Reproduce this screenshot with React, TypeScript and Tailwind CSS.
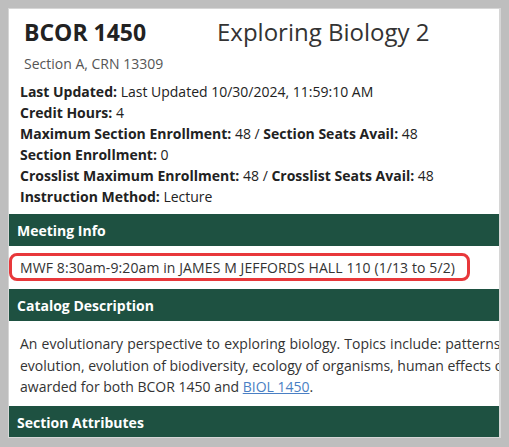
import React from "react";

const font = { fontFamily: '"Open Sans", "Noto Sans", Arial, sans-serif' };

function Bar({ title }: { title: string }) {
  return (
    <div className="h-[32px] bg-[#1e5141] pl-[8px] flex items-center text-white font-bold text-[14px] leading-[21px]">
      {title}
    </div>
  );
}

function Line({ label, children }: { label: string; children?: React.ReactNode }) {
  return (
    <div className="whitespace-nowrap">
      <span className="font-bold">{label}</span> {children}
    </div>
  );
}

export default function App() {
  return (
    <div className="w-[509px] h-[447px] bg-[#bebebe] pt-[8px] pl-[8px]" style={font}>
      <div className="w-[493px] h-[430px] bg-white border-t border-l border-b border-r-2 border-[#d6d6d6] overflow-hidden text-[#222] text-[14px] leading-[21px]">
        <div className="pt-[8px] pl-[15px]">
          <div className="flex items-baseline whitespace-nowrap">
            <span className="w-[193px] font-bold text-[23px] leading-[29px] text-[#222]">BCOR 1450</span>
            <span className="text-[24px] leading-[29px] text-[#333]">Exploring Biology 2</span>
          </div>
          <div className="mt-[6px] text-[#555]">Section A, CRN 13309</div>
        </div>
        <div className="pl-[11px] mt-[7px] pb-[7px]">
          <Line label="Last Updated:">Last Updated 10/30/2024, 11:59:10 AM</Line>
          <Line label="Credit Hours:">4</Line>
          <div className="whitespace-nowrap">
            <span className="font-bold">Maximum Section Enrollment:</span> 48 /{" "}
            <span className="font-bold">Section Seats Avail:</span> 48
          </div>
          <Line label="Section Enrollment:">0</Line>
          <div className="whitespace-nowrap">
            <span className="font-bold">Crosslist Maximum Enrollment:</span> 48 /{" "}
            <span className="font-bold">Crosslist Seats Avail:</span> 48
          </div>
          <Line label="Instruction Method:">Lecture</Line>
        </div>
        <Bar title="Meeting Info" />
        <div className="relative h-[43px] pl-[11px] flex items-center whitespace-nowrap text-[#333] [letter-spacing:0.1px]">
          MWF 8:30am-9:20am in JAMES M JEFFORDS HALL 110 (1/13 to 5/2)
          <div className="absolute left-0 top-[7px] w-[461px] h-[28px] border-[3px] border-[#e8383b] rounded-[8px]" />
        </div>
        <Bar title="Catalog Description" />
        <div className="h-[85px] pl-[11px] pt-[12px] whitespace-nowrap text-[#333] leading-[21.5px]">
          <div className="[word-spacing:0.5px]">An evolutionary perspective to exploring biology. Topics include: patterns of inheritance, mechanisms of</div>
          <div>evolution, evolution of biodiversity, ecology of organisms, human effects on the environment. Credit not</div>
          <div>
            awarded for both BCOR 1450 and{" "}
            <a className="text-[#4a7fc4] underline" href="#">BIOL 1450</a>.
          </div>
        </div>
        <Bar title="Section Attributes" />
      </div>
    </div>
  );
}
